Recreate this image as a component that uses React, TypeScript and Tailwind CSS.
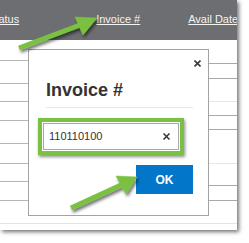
import React from "react";

const leftRows = [21, 23, 18, 19, 23, 20, 18, 19];
const rightRows: [number, boolean][] = [
  [24, false],
  [15, false],
  [23, true],
  [14, false],
  [14, false],
  [34, true],
  [22, false],
  [15, false],
];

export default function App() {
  return (
    <div
      className="relative w-[249px] h-[243px] bg-white overflow-hidden"
      style={{ fontFamily: '"Liberation Sans", Arial, sans-serif' }}
    >
      {/* page screenshot */}
      <div className="w-[237px] h-[230px] bg-white overflow-hidden shadow-[2px_2px_4px_rgba(0,0,0,0.55)]">
        <div className="h-[40px] bg-[#6d6e71] flex items-start pt-[13px] text-[11px] leading-[13px] text-[#f3f3f3] whitespace-nowrap">
          <span className="ml-[-12px] underline">Status</span>
          <span className="ml-[77px] underline">Invoice #</span>
          <span className="ml-[48px] underline">Avail Date</span>
        </div>
        <div className="h-[184px] flex border-b border-[#e4e4e4]">
          <div className="w-[29px] flex flex-col">
            {leftRows.map((h, i) => (
              <div key={i} className="border-b border-[#b5b5b5]" style={{ height: h }} />
            ))}
          </div>
          <div className="flex-1" />
          <div className="w-[29px] flex flex-col">
            {rightRows.map(([h, light], i) => (
              <div
                key={i}
                className={light ? "border-b border-[#e6e6e6]" : "border-b border-[#a9a9a9]"}
                style={{ height: h }}
              />
            ))}
          </div>
        </div>
      </div>

      {/* modal */}
      <div className="absolute left-[28px] top-[49px] w-[181px] h-[167px] bg-white border border-[#a3a3a3] pl-[17px] pr-[15px] pt-[30px]">
        <svg className="absolute left-[165px] top-[10px]" width="7" height="7" viewBox="0 0 7 7">
          <path d="M0.5 0.5 L6.5 6.5 M6.5 0.5 L0.5 6.5" stroke="#3a3a3a" strokeWidth="1.6" />
        </svg>
        <div className="text-[18px] leading-[20px] font-bold text-[#333333] pb-[7px] border-b border-[#e8e8e8]">
          Invoice #
        </div>
        <div className="mt-[10px] ml-[-8px] w-[146px] h-[37px] border-[4px] border-[#7ac143] p-[1px] bg-white shadow-[1px_2px_3px_rgba(0,0,0,0.45)]">
          <div className="h-full border border-[#a8a8a8] flex items-center pl-[5px] pr-[8px] text-[11px] text-[#333333]">
            <span className="flex-1">110110100</span>
            <svg width="7" height="7" viewBox="0 0 7 7">
              <path d="M0.5 0.5 L6.5 6.5 M6.5 0.5 L0.5 6.5" stroke="#333333" strokeWidth="1.5" />
            </svg>
          </div>
        </div>
        <div className="mt-[10px] flex justify-end">
          <div className="w-[57px] h-[29px] bg-[#0276c9] text-white text-[12px] font-bold flex items-center justify-center">
            OK
          </div>
        </div>
      </div>

      {/* annotation arrows */}
      <svg className="absolute left-0 top-0 pointer-events-none" width="249" height="243" viewBox="0 0 249 243">
        <defs>
          <filter id="sh" x="-20%" y="-20%" width="140%" height="160%">
            <feDropShadow dx="1.5" dy="2.5" stdDeviation="1.5" floodColor="#000" floodOpacity="0.55" />
          </filter>
        </defs>
        <g filter="url(#sh)" fill="#7ac143" stroke="#7ac143">
          <line x1="19" y1="48" x2="80" y2="25" strokeWidth="5" />
          <polygon points="97,18 75,17 83,35" strokeWidth="0.5" strokeLinejoin="round" />
          <line x1="71" y1="208" x2="121" y2="185" strokeWidth="5" />
          <polygon points="137,177 116,176 126,194" strokeWidth="0.5" strokeLinejoin="round" />
        </g>
      </svg>
    </div>
  );
}
